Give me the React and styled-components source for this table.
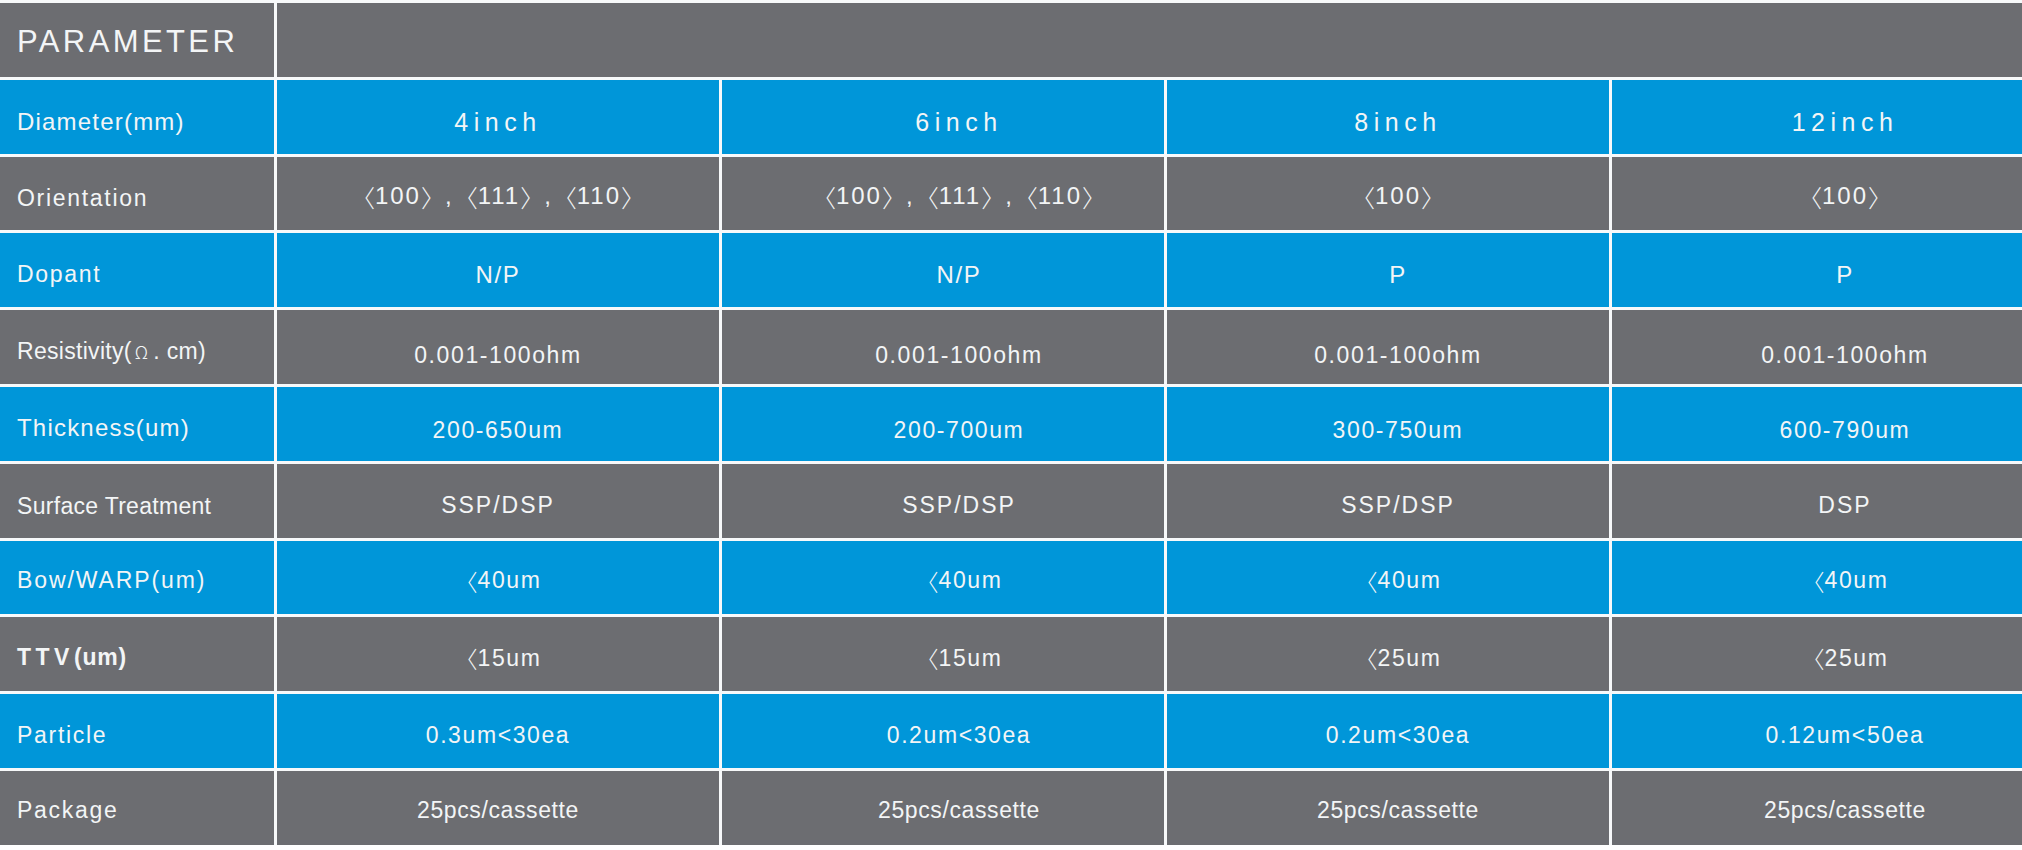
import React from "react";
import styled, { createGlobalStyle } from "styled-components";

const GlobalStyle = createGlobalStyle`
  html, body {
    margin: 0;
    padding: 0;
    background: #ffffff;
    overflow: hidden;
  }
  body {
    font-family: "Liberation Sans", Arial, "Noto Sans CJK SC", sans-serif;
  }
`;

const BLUE = "#0096d9";
const GRAY = "#6c6d71";
const LINE = "#f7f9fa";

/* text in the value columns sits a little right of each cell's centre */
const COLUMN_NUDGE = [0, 16, 10, 12];

const Table = styled.div`
  display: flex;
  flex-direction: column;
  gap: 3px;
  width: 2054px;
  padding-top: 3px;
  background: ${LINE};
`;

const Row = styled.div`
  display: grid;
  grid-template-columns: 274px repeat(4, 442px);
  gap: 3px;
  height: 73.8px;
`;

const Cell = styled.div`
  display: flex;
  align-items: center;
  justify-content: center;
  padding-top: ${(p) => p.$shift ?? 9}px;
  padding-left: ${(p) => (p.$nudge ?? 0) * 2}px;
  box-sizing: border-box;
  background: ${(p) => (p.$blue ? BLUE : GRAY)};
  color: #f3f5f6;
  font-family: "Liberation Sans", Arial, "Noto Sans CJK SC", sans-serif;
  font-size: ${(p) => p.$size ?? 23}px;
  letter-spacing: ${(p) => p.$spacing ?? 1.6}px;
  white-space: nowrap;
`;

const LabelCell = styled(Cell)`
  justify-content: flex-start;
  padding-left: 17px;
`;

const HeaderTitle = styled(LabelCell)`
  font-size: 31px;
  letter-spacing: 3.4px;
  padding-top: 5px;
`;

const HeaderFill = styled(Cell)`
  grid-column: span 4;
`;

const Bold = styled.span`
  font-weight: 700;
  letter-spacing: 0.8px;
`;

const Tracked = styled.span`
  font-weight: 600;
  letter-spacing: 4.5px;
`;

const Ohm = styled.span`
  font-family: "Noto Sans CJK SC", sans-serif;
  font-size: 18px;
  font-weight: 300;
  padding: 0 5px 0 3px;
`;

const Bracket = styled.span`
  font-family: "Noto Sans CJK SC", sans-serif;
  font-weight: 300;
  letter-spacing: 0;
`;

const br = (inner) => (
  <>
    <Bracket>〈</Bracket>
    {inner}
    <Bracket>〉</Bracket>
  </>
);

const orientAll = (
  <>
    {br("100")} , {br("111")} , {br("110")}
  </>
);

const lt = (v) => (
  <>
    <Bracket>〈</Bracket>
    {v}
  </>
);

const rows = [
  {
    label: "Diameter(mm)",
    labelSize: 24,
    labelSpacing: 1.2,
    values: ["4inch", "6inch", "8inch", "12inch"],
    size: 25,
    spacing: 5.5,
    shift: 11,
  },
  {
    label: "Orientation",
    values: [orientAll, orientAll, br("100"), br("100")],
    size: 24,
    spacing: 2,
    shift: 6,
  },
  { label: "Dopant", values: ["N/P", "N/P", "P", "P"], size: 24, shift: 9 },
  {
    label: (
      <>
        Resistivity(<Ohm>Ω</Ohm>. cm)
      </>
    ),
    labelSpacing: 0.3,
    values: Array(4).fill("0.001-100ohm"),
    shift: 16,
  },
  {
    label: "Thickness(um)",
    labelSize: 24,
    labelSpacing: 1.2,
    values: ["200-650um", "200-700um", "300-750um", "600-790um"],
    shift: 14,
  },
  {
    label: "Surface Treatment",
    labelSpacing: 0.3,
    values: ["SSP/DSP", "SSP/DSP", "SSP/DSP", "DSP"],
    size: 23,
    spacing: 2,
    shift: 9,
  },
  {
    label: "Bow/WARP(um)",
    labelSpacing: 1.9,
    values: Array(4).fill(lt("40um")),
    shift: 7,
  },
  {
    label: (
      <>
        <Tracked>TTV</Tracked>
        <Bold>(um)</Bold>
      </>
    ),
    values: [lt("15um"), lt("15um"), lt("25um"), lt("25um")],
    shift: 8,
  },
  {
    label: "Particle",
    values: ["0.3um<30ea", "0.2um<30ea", "0.2um<30ea", "0.12um<50ea"],
    shift: 8,
  },
  {
    label: "Package",
    values: Array(4).fill("25pcs/cassette"),
    spacing: 0.6,
    shift: 6,
  },
];

const labelShift = [10, 10, 9, 8, 9, 11, 7, 7, 8, 6];

export default function App() {
  return (
    <>
      <GlobalStyle />
      <Table>
        <Row>
          <HeaderTitle>PARAMETER</HeaderTitle>
          <HeaderFill />
        </Row>
        {rows.map((r, i) => {
          const blue = i % 2 === 0;
          return (
            <Row key={i}>
              <LabelCell
                $blue={blue}
                $size={r.labelSize ?? 23}
                $spacing={r.labelSpacing ?? 1.7}
                $shift={labelShift[i]}
              >
                {r.label}
              </LabelCell>
              {r.values.map((v, j) => (
                <Cell
                  key={j}
                  $blue={blue}
                  $size={r.size}
                  $spacing={r.spacing}
                  $shift={r.shift}
                  $nudge={COLUMN_NUDGE[j]}
                >
                  {v}
                </Cell>
              ))}
            </Row>
          );
        })}
      </Table>
    </>
  );
}
